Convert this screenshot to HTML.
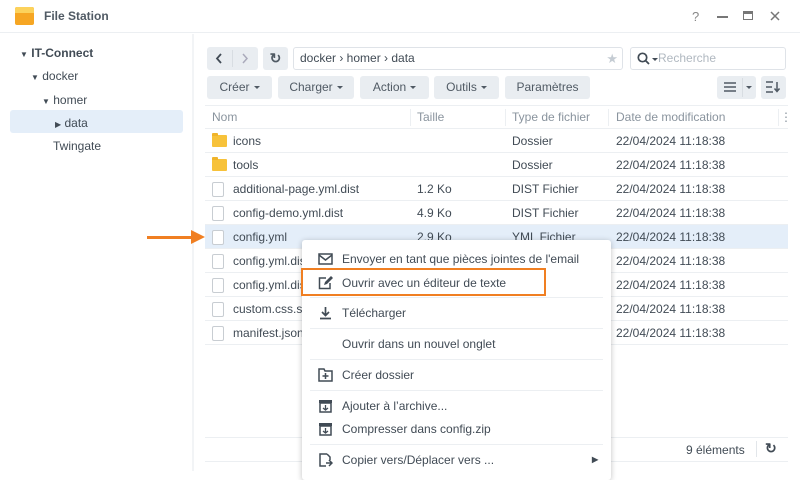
<!DOCTYPE html>
<html><head><meta charset="utf-8"><style>
*{margin:0;padding:0;box-sizing:border-box}
body{width:800px;height:471px;overflow:hidden;background:#fff;font-family:"Liberation Sans",sans-serif;font-size:12px;color:#414b55;position:relative}
.a{position:absolute}
.btn{position:absolute;background:#e9edf1;border-radius:3px;height:23px;line-height:23px;text-align:center;color:#505a64;font-size:12px}
.car{display:inline-block;border-left:3px solid transparent;border-right:3px solid transparent;border-top:3px solid #505a64;vertical-align:middle;margin-left:4px}
.row{position:absolute;left:205px;width:583px;height:24px;border-bottom:1px solid #eceff2;line-height:24px}
.row span{position:absolute}
.fold{position:absolute;left:7px;top:6px;width:15px;height:12px;background:#f7c23a;border-radius:1px}
.fold:before{content:"";position:absolute;left:0;top:-2px;width:6px;height:3px;background:#f0b42a;border-radius:1px 1px 0 0}
.file{position:absolute;left:7px;top:5px;width:12px;height:15px;border:1px solid #c8cdd2;border-radius:2px;background:#fff}
.mi{position:absolute;left:302px;width:309px;height:24px;line-height:24px;color:#414b55;font-size:12px}
.mi span{position:absolute;left:40px}
.sep{position:absolute;left:310px;width:293px;height:1px;background:#eceff2}
.ic{position:absolute;left:16px;top:5px}
</style></head><body>
<div class="a" style="left:0;top:0;width:800px;height:33px;border-bottom:1px solid #eceff2"></div>
<div class="a" style="left:15px;top:7px;width:19px;height:18px;background:#f6a623;border-radius:2px"></div>
<div class="a" style="left:15px;top:7px;width:19px;height:6px;background:#fcd25c;border-radius:2px 2px 0 0"></div>
<div class="a" style="left:44px;top:9px;font-weight:bold;font-size:12px;color:#505a64">File Station</div>
<div class="a" style="left:692px;top:9px;color:#888;font-size:13px">?</div>
<div class="a" style="left:717px;top:16px;width:11px;height:1.5px;background:#777"></div>
<div class="a" style="left:743px;top:11px;width:10px;height:9px;border:1.5px solid #777;border-top-width:3px"></div>
<svg class="a" style="left:770px;top:11px" width="10" height="10" viewBox="0 0 10 10"><path d="M1 1l8 8M9 1l-8 8" stroke="#777" stroke-width="1.5"/></svg>
<div class="a" style="left:192px;top:34px;width:2px;height:437px;background:#f2f4f6"></div>
<div class="a" style="left:20px;top:46px;font-weight:bold;font-size:12px;color:#414b55"><span style="font-size:8px">▼</span> IT-Connect</div>
<div class="a" style="left:31px;top:69px"><span style="font-size:8px">▼</span> docker</div>
<div class="a" style="left:42px;top:93px"><span style="font-size:8px">▼</span> homer</div>
<div class="a" style="left:10px;top:110px;width:173px;height:23px;background:#e4eef9;border-radius:3px"></div>
<div class="a" style="left:55px;top:116px"><span style="font-size:8px">▶</span> data</div>
<div class="a" style="left:53px;top:139px">Twingate</div>
<div class="btn" style="left:207px;top:47px;width:51px"></div>
<div class="a" style="left:232px;top:50px;width:1px;height:17px;background:#d8dde2"></div>
<svg class="a" style="left:215px;top:53px" width="8" height="11" viewBox="0 0 8 11"><path d="M6 1L2 5.5 6 10" fill="none" stroke="#414b55" stroke-width="1.8"/></svg>
<svg class="a" style="left:241px;top:53px" width="8" height="11" viewBox="0 0 8 11"><path d="M2 1l4 4.5L2 10" fill="none" stroke="#aab" stroke-width="1.5"/></svg>
<div class="btn" style="left:263px;top:47px;width:25px;font-weight:bold;font-size:14px">↻</div>
<div class="a" style="left:293px;top:47px;width:330px;height:23px;border:1px solid #dfe3e8;border-radius:3px;line-height:21px;padding-left:6px;color:#414b55">docker › homer › data<span style="position:absolute;right:4px;color:#c5ccd3;font-size:13px">★</span></div>
<div class="a" style="left:630px;top:47px;width:156px;height:23px;border:1px solid #dfe3e8;border-radius:3px;line-height:21px;padding-left:27px;color:#b0b8c0">Recherche</div>
<svg class="a" style="left:637px;top:52px" width="13" height="13" viewBox="0 0 13 13"><circle cx="5.5" cy="5.5" r="4.2" fill="none" stroke="#414b55" stroke-width="1.7"/><path d="M8.5 8.5l3.5 3.5" stroke="#414b55" stroke-width="1.8"/></svg>
<div class="a" style="left:652px;top:58px;border-left:3px solid transparent;border-right:3px solid transparent;border-top:3px solid #414b55"></div>
<div class="btn" style="left:207px;top:76px;width:65px">Créer<span class="car"></span></div>
<div class="btn" style="left:278px;top:76px;width:76px">Charger<span class="car"></span></div>
<div class="btn" style="left:360px;top:76px;width:69px">Action<span class="car"></span></div>
<div class="btn" style="left:434px;top:76px;width:65px">Outils<span class="car"></span></div>
<div class="btn" style="left:505px;top:76px;width:85px">Paramètres</div>
<div class="btn" style="left:717px;top:76px;width:39px"></div>
<svg class="a" style="left:724px;top:82px" width="12" height="10" viewBox="0 0 12 10"><path d="M0 1h12M0 5h12M0 9h12" stroke="#505a64" stroke-width="1.6"/></svg>
<div class="a" style="left:742px;top:78px;width:1px;height:19px;background:#d8dde2"></div>
<div class="a" style="left:746px;top:86px;border-left:3px solid transparent;border-right:3px solid transparent;border-top:3px solid #505a64"></div>
<div class="btn" style="left:761px;top:76px;width:25px"></div>
<svg class="a" style="left:766px;top:81px" width="14" height="12" viewBox="0 0 14 12"><path d="M0 1h7M0 6h6M0 11h7M11 1v9M8.5 7.5L11 10.5 13.5 7.5" fill="none" stroke="#505a64" stroke-width="1.5"/></svg>
<div class="a" style="left:205px;top:105px;width:583px;height:24px;border-top:1px solid #eceff2;border-bottom:1px solid #eceff2;color:#8a949e;line-height:23px">
<span class="a" style="left:7px">Nom</span>
<span class="a" style="left:205px;top:3px;width:1px;height:17px;background:#eceff2"></span>
<span class="a" style="left:212px">Taille</span>
<span class="a" style="left:300px;top:3px;width:1px;height:17px;background:#eceff2"></span>
<span class="a" style="left:307px">Type de fichier</span>
<span class="a" style="left:403px;top:3px;width:1px;height:17px;background:#eceff2"></span>
<span class="a" style="left:411px">Date de modification</span>
<span class="a" style="left:573px;top:3px;width:1px;height:17px;background:#eceff2"></span>
<span class="a" style="left:575px">⋮</span>
</div>
<div class="row" style="top:129px"><i class="fold"></i><span style="left:28px">icons</span><span style="left:307px">Dossier</span><span style="left:411px">22/04/2024 11:18:38</span></div>
<div class="row" style="top:153px"><i class="fold"></i><span style="left:28px">tools</span><span style="left:307px">Dossier</span><span style="left:411px">22/04/2024 11:18:38</span></div>
<div class="row" style="top:177px"><i class="file"></i><span style="left:28px">additional-page.yml.dist</span><span style="left:212px">1.2 Ko</span><span style="left:307px">DIST Fichier</span><span style="left:411px">22/04/2024 11:18:38</span></div>
<div class="row" style="top:201px"><i class="file"></i><span style="left:28px">config-demo.yml.dist</span><span style="left:212px">4.9 Ko</span><span style="left:307px">DIST Fichier</span><span style="left:411px">22/04/2024 11:18:38</span></div>
<div class="row" style="top:225px;background:#e4eef9"><i class="file"></i><span style="left:28px">config.yml</span><span style="left:212px">2.9 Ko</span><span style="left:307px">YML Fichier</span><span style="left:411px">22/04/2024 11:18:38</span></div>
<div class="row" style="top:249px"><i class="file"></i><span style="left:28px">config.yml.dist</span><span style="left:411px">22/04/2024 11:18:38</span></div>
<div class="row" style="top:273px"><i class="file"></i><span style="left:28px">config.yml.dist</span><span style="left:411px">22/04/2024 11:18:38</span></div>
<div class="row" style="top:297px"><i class="file"></i><span style="left:28px">custom.css.sample</span><span style="left:411px">22/04/2024 11:18:38</span></div>
<div class="row" style="top:321px"><i class="file"></i><span style="left:28px">manifest.json</span><span style="left:411px">22/04/2024 11:18:38</span></div>
<div class="a" style="left:205px;top:437px;width:583px;height:25px;border-top:1px solid #eceff2;border-bottom:1px solid #eceff2"></div>
<div class="a" style="left:686px;top:443px">9 éléments</div>
<div class="a" style="left:756px;top:441px;width:1px;height:16px;background:#e2e6ea"></div>
<div class="a" style="left:765px;top:440px;font-weight:bold;font-size:14px">↻</div>
<div class="a" style="left:147px;top:236px;width:46px;height:3px;background:#f07f22"></div>
<div class="a" style="left:191px;top:230px;width:0;height:0;border-top:7.5px solid transparent;border-bottom:7.5px solid transparent;border-left:14px solid #f07f22"></div>
<div class="a" style="left:302px;top:240px;width:309px;height:240px;background:#fff;border-radius:3px;box-shadow:0 1px 6px rgba(0,0,0,.25)"></div>
<div class="mi" style="top:247px"><svg class="ic" width="15" height="14" viewBox="0 0 15 14"><rect x="1" y="2" width="13" height="10" fill="none" stroke="#414b55" stroke-width="1.5"/><path d="M1 3l6.5 5 6.5-5" fill="none" stroke="#414b55" stroke-width="1.5"/></svg><span>Envoyer en tant que pièces jointes de l'email</span></div>
<div class="mi" style="top:271px"><svg class="ic" width="15" height="14" viewBox="0 0 15 14"><path d="M8 2H1.5v10.5H12V7" fill="none" stroke="#414b55" stroke-width="1.5"/><path d="M6 9l1-3 6-6 2 2-6 6z" fill="#414b55"/></svg><span>Ouvrir avec un éditeur de texte</span></div>
<div class="a" style="left:301px;top:268px;width:245px;height:28px;border:2.5px solid #f07f22"></div>
<div class="sep" style="top:297px"></div>
<div class="mi" style="top:301px"><svg class="ic" width="15" height="14" viewBox="0 0 15 14"><path d="M7.5 1v8M4 6l3.5 3.5L11 6M2 12.5h11" fill="none" stroke="#414b55" stroke-width="1.7"/></svg><span>Télécharger</span></div>
<div class="sep" style="top:328px"></div>
<div class="mi" style="top:332px"><span>Ouvrir dans un nouvel onglet</span></div>
<div class="sep" style="top:359px"></div>
<div class="mi" style="top:363px"><svg class="ic" width="15" height="14" viewBox="0 0 15 14"><path d="M1 1h5l1 2h7v10H1z" fill="none" stroke="#414b55" stroke-width="1.5"/><path d="M7.5 5v6M4.5 8h6" stroke="#414b55" stroke-width="1.5"/></svg><span>Créer dossier</span></div>
<div class="sep" style="top:390px"></div>
<div class="mi" style="top:394px"><svg class="ic" width="15" height="14" viewBox="0 0 15 14"><rect x="1" y="1" width="13" height="3" fill="#414b55"/><rect x="2" y="4" width="11" height="9" fill="none" stroke="#414b55" stroke-width="1.5"/><path d="M7.5 6v5M5 9l2.5 2 2.5-2" fill="none" stroke="#414b55" stroke-width="1.3"/></svg><span>Ajouter à l’archive...</span></div>
<div class="mi" style="top:417px"><svg class="ic" width="15" height="14" viewBox="0 0 15 14"><rect x="1" y="1" width="13" height="3" fill="#414b55"/><rect x="2" y="4" width="11" height="9" fill="none" stroke="#414b55" stroke-width="1.5"/><path d="M7.5 6v5M5 9l2.5 2 2.5-2" fill="none" stroke="#414b55" stroke-width="1.3"/></svg><span>Compresser dans config.zip</span></div>
<div class="sep" style="top:444px"></div>
<div class="mi" style="top:448px"><svg class="ic" width="15" height="14" viewBox="0 0 15 14"><path d="M9 1H2v12h6M9 1l3 3v3" fill="none" stroke="#414b55" stroke-width="1.5"/><path d="M8 10h6M11 7l3 3-3 3" fill="none" stroke="#414b55" stroke-width="1.5"/></svg><span>Copier vers/Déplacer vers ...</span><b style="position:absolute;left:290px;font-size:8px">▶</b></div>
</body></html>
